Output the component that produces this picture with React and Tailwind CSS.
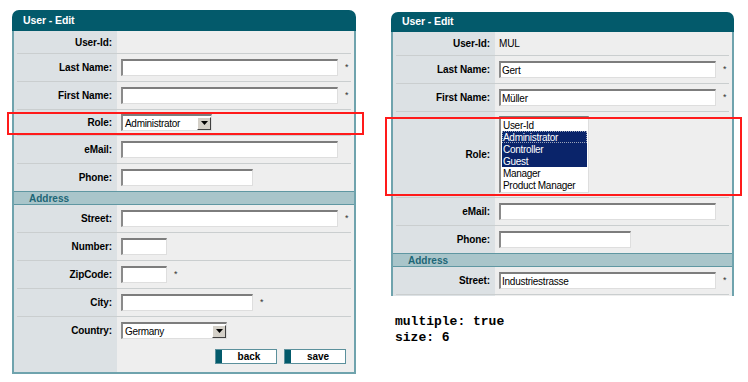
import React from 'react';

const Sep = () => (
  <div className="flex h-px">
    <div className="w-[3px] bg-[#dce1e4]" />
    <div className="flex-1 bg-[#cacecf]" />
    <div className="w-[3px] bg-[#eeeeee]" />
  </div>
);

const Row = ({ label, h = 'h-[27px]', lw = 'w-[103px]', children, sep = true }) => (
  <>
    <div className={`flex ${h}`}>
      <div className={`${lw} shrink-0 bg-[#dce1e4] flex items-center justify-end pr-[5px] font-bold text-[10px] tracking-[-0.1px] text-black`}>
        {label}
      </div>
      <div className="flex-1 bg-[#eeeeee] flex items-center pl-[4px]">{children}</div>
    </div>
    {sep && <Sep />}
  </>
);

const Field = ({ w = 'w-[217px]', value = '' }) => (
  <input
    readOnly
    value={value}
    className={`${w} h-[17px] bg-white border-t-2 border-l-2 border-r border-b border-t-[#7d7d7d] border-l-[#8a8a8a] border-r-[#dedede] border-b-[#dedede] text-[10px] tracking-[-0.25px] pl-[1px] text-black outline-none`}
  />
);

const Star = ({ ml = 'ml-[7px]' }) => <span className={`${ml} text-[9px] text-[#333] leading-none`}>*</span>;

const Arrow = () => (
  <div className="w-[14px] h-[13px] bg-[#d4d0c8] border border-t-white border-l-white border-r-[#404040] border-b-[#404040] flex items-center justify-center">
    <svg width="7" height="4" viewBox="0 0 7 4">
      <path d="M0 0h7L3.5 4z" fill="#000" />
    </svg>
  </div>
);

const Select = ({ w, value }) => (
  <div className={`${w} h-[17px] bg-white border-t-2 border-l-2 border-r border-b border-t-[#7d7d7d] border-l-[#8a8a8a] border-r-[#dedede] border-b-[#dedede] flex items-center justify-between`}>
    <span className="text-[10px] tracking-[-0.3px] pl-[2px]">{value}</span>
    <Arrow />
  </div>
);

const Btn = ({ children }) => (
  <div className="w-[62px] h-[15px] flex border border-[#5b909c] bg-white">
    <div className="w-[6px] bg-[#035a6b]" />
    <div className="flex-1 flex items-center justify-center font-bold text-[10px] text-black">{children}</div>
  </div>
);

const Header = ({ h }) => (
  <div className={`${h} rounded-t-[7px] bg-[#035a6b] flex items-center pl-[11px] text-white font-bold text-[10.5px] tracking-[-0.1px]`}>
    User - Edit
  </div>
);

const Address = () => (
  <div className="h-[14px] bg-[#a9c5ca] border-t border-b border-[#5f97a2] flex items-center pl-[15px] text-[#1d6676] font-bold text-[10px]">
    Address
  </div>
);

const roles = [
  ['User-Id', false],
  ['Administrator', true],
  ['Controller', true],
  ['Guest', true],
  ['Manager', false],
  ['Product Manager', false],
];

export default function App() {
  return (
    <div className="w-[748px] h-[382px] bg-white flex items-start overflow-hidden font-['Liberation_Sans',Arial,sans-serif] text-black">
      {/* left: single select */}
      <div className="w-[344px] ml-[12px] mt-[10px]">
        <Header h="h-[21px]" />
        <div className="border-l-2 border-r-2 border-b-2 border-[#6fa3ad]">
          <Row label="User-Id:" h="h-[22px]" />
          <Row label="Last Name:">
            <Field />
            <Star />
          </Row>
          <Row label="First Name:">
            <Field />
            <Star />
          </Row>
          <div className="relative">
            <Row label="Role:" h="h-[25px]">
              <Select w="w-[91px]" value="Administrator" />
            </Row>
            <div className="absolute -left-[7px] -right-[10px] top-[2px] bottom-[1px] border-2 border-[#ff1a1a]" />
          </div>
          <Row label="eMail:">
            <Field />
          </Row>
          <Row label="Phone:" sep={false}>
            <Field w="w-[132px]" />
          </Row>
          <Address />
          <Row label="Street:">
            <Field />
            <Star />
          </Row>
          <Row label="Number:">
            <Field w="w-[46px]" />
          </Row>
          <Row label="ZipCode:">
            <Field w="w-[46px]" />
            <Star />
          </Row>
          <Row label="City:">
            <Field w="w-[132px]" />
            <Star />
          </Row>
          <Row label="Country:" h="h-[27px]" sep={false}>
            <Select w="w-[106px]" value="Germany" />
          </Row>
          <div className="flex h-[28px]">
            <div className="w-[103px] bg-[#dce1e4]" />
            <div className="flex-1 bg-[#eeeeee] flex items-start justify-end gap-[7px] pr-[8px] pt-[5px]">
              <Btn>back</Btn>
              <Btn>save</Btn>
            </div>
          </div>
        </div>
      </div>

      {/* right: multiple select */}
      <div className="w-[343px] ml-[35px] mt-[12px]">
        <Header h="h-[20px]" />
        <div className="border-l-2 border-r-2 border-[#6fa3ad]">
          <Row label="User-Id:" lw="w-[102px]" h="h-[23px]">
            <span className="text-[10px] tracking-[-0.2px]">MUL</span>
          </Row>
          <Row label="Last Name:" lw="w-[102px]">
            <Field value="Gert" />
            <Star />
          </Row>
          <Row label="First Name:" lw="w-[102px]">
            <Field value="Müller" />
            <Star />
          </Row>
          <div className="relative">
            <Row label="Role:" lw="w-[102px]" h="h-[85px]">
              <div className="w-[90px] bg-white border-t-2 border-l-2 border-r border-b border-t-[#7d7d7d] border-l-[#8a8a8a] border-r-[#dedede] border-b-[#dedede] p-px">
                {roles.map(([r, sel]) => (
                  <div
                    key={r}
                    className={`h-[12px] flex items-center pl-px text-[10px] tracking-[-0.3px] ${
                      sel ? 'bg-[#0a246a] text-white' : 'text-black'
                    } ${r === 'Administrator' ? 'outline outline-1 outline-dotted outline-[#9aa3b8] -outline-offset-1' : ''}`}
                  >
                    {r}
                  </div>
                ))}
              </div>
            </Row>
            <div className="absolute -left-[8px] -right-[10px] top-[5px] bottom-[2px] border-2 border-[#ff1a1a]" />
          </div>
          <Row label="eMail:" lw="w-[102px]">
            <Field />
          </Row>
          <Row label="Phone:" lw="w-[102px]" sep={false}>
            <Field w="w-[132px]" />
          </Row>
          <Address />
          <Row label="Street:" lw="w-[102px]">
            <Field value="Industriestrasse" />
            <Star />
          </Row>
          <div className="flex h-px">
            <div className="w-[102px] bg-[#dce1e4]" />
            <div className="flex-1 bg-[#eeeeee]" />
          </div>
        </div>
        <div className="mt-[18px] pl-[4px] font-['Liberation_Mono','Courier_New',monospace] font-bold text-[13px] leading-[16px] text-black">
          <div>multiple: true</div>
          <div>size: 6</div>
        </div>
      </div>
    </div>
  );
}
